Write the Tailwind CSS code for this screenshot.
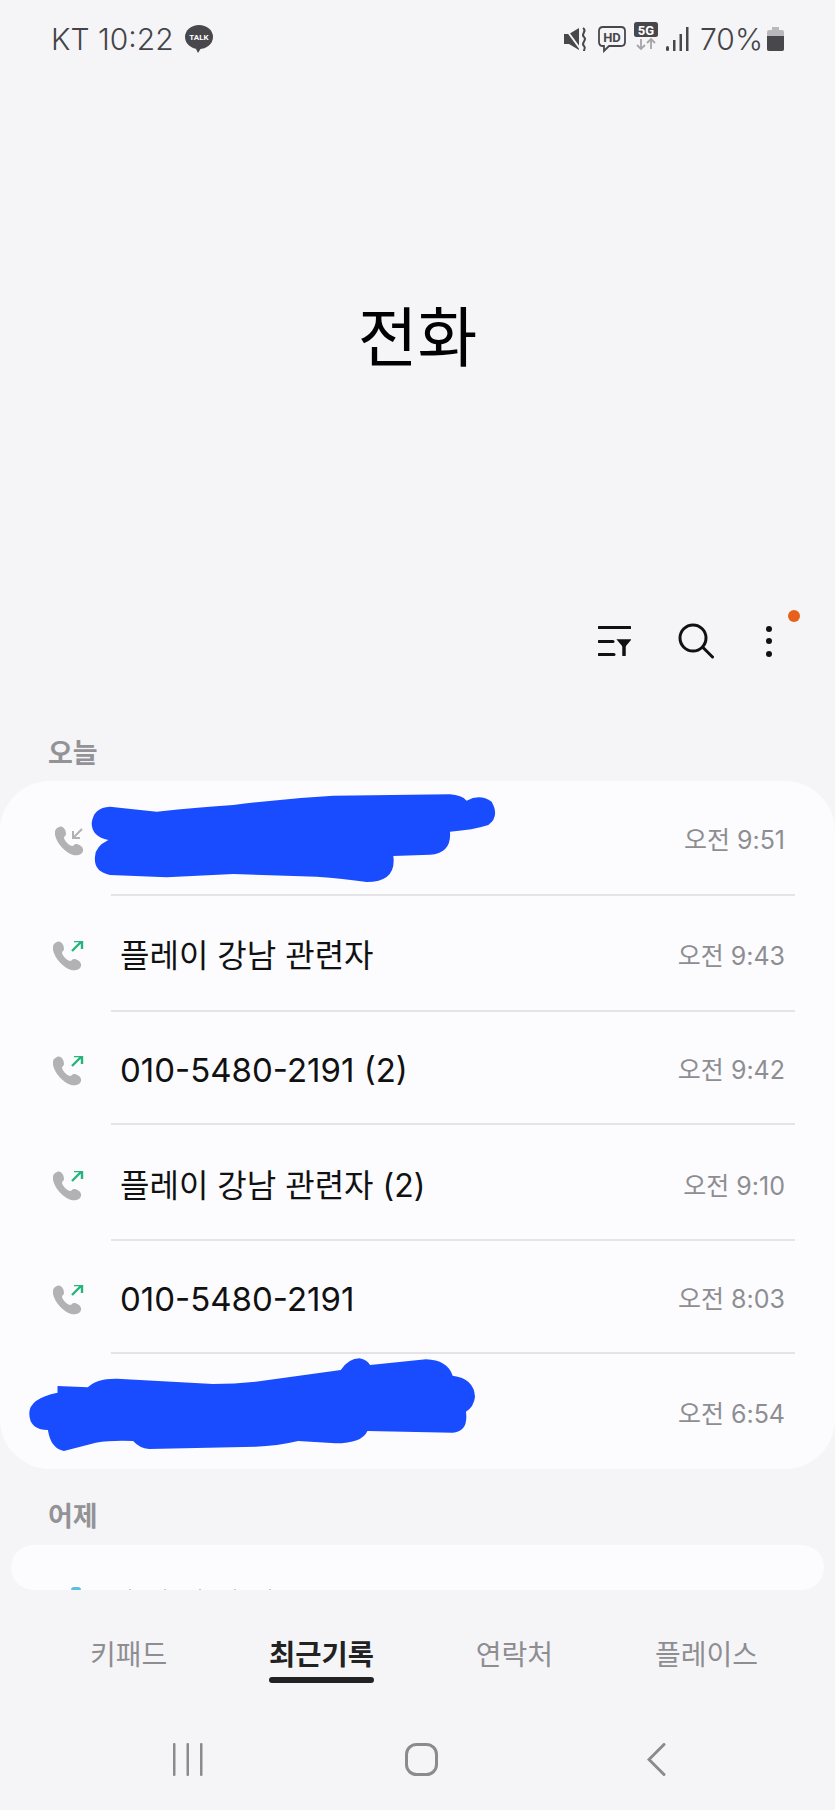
<!DOCTYPE html>
<html lang="ko">
<head>
    <meta charset="UTF-8">
    <meta name="viewport" content="width=device-width, initial-scale=1.0">
    <title>전화</title>
    <script src="https://cdn.jsdelivr.net/npm/@tailwindcss/browser@4"></script>
</head>
<body class="bg-[#f5f5f7]">
<div class="w-[835px] h-[1810px] overflow-hidden bg-[#f5f5f7] font-[Inter,'Noto_Sans_CJK_KR',sans-serif]">

    <!-- 상태 표시줄 -->
    <div class="h-[78px] flex items-center pl-[51px] pr-[51px] text-[#444448]">
        <span class="text-[30px] font-light leading-none">KT 10:22</span>
        <svg class="ml-[11px]" width="28" height="28" viewBox="0 0 28 28">
            <ellipse cx="14" cy="12" rx="14" ry="12" fill="#48484c"/>
            <path d="M9 20 L13 28 L18 20 Z" fill="#48484c"/>
            <text x="14" y="15" text-anchor="middle" font-size="8" font-weight="700" fill="#fff" font-family="Roboto">TALK</text>
        </svg>
        <div class="ml-auto flex items-center">
            <svg width="24" height="24" viewBox="0 0 24 24">
                <path d="M0 7 H5 L15 1 V23 L5 17 H0 Z" fill="#48484c"/>
                <path d="M1 1 L17 23" stroke="#f5f5f7" stroke-width="2"/>
                <path d="M19 1 C24 4 16 7 20 10 C24 13 16 16 20 19 C22 21 20 22 20 24" stroke="#48484c" stroke-width="2" fill="none"/>
            </svg>
            <svg class="ml-[10px]" width="28" height="28" viewBox="0 0 28 28">
                <path d="M5 2 H23 Q27 2 27 6 V17 Q27 21 23 21 H11 L6 26 V21 H5 Q1 21 1 17 V6 Q1 2 5 2 Z" fill="none" stroke="#48484c" stroke-width="1.8"/>
                <text x="14" y="16.5" text-anchor="middle" font-size="13" font-weight="700" fill="#48484c" font-family="Roboto">HD</text>
            </svg>
            <svg class="ml-[8px] -mt-[6px]" width="24" height="28" viewBox="0 0 24 28">
                <rect x="0" y="0" width="24" height="15" rx="2.5" fill="#48484c"/>
                <text x="12" y="12.5" text-anchor="middle" font-size="13" font-weight="700" fill="#fff" font-family="Roboto">5G</text>
                <path d="M7 17 V27 M3 23 L7 27 L11 23" stroke="#a5a5a8" stroke-width="1.8" fill="none"/>
                <path d="M17 27 V17 M13 21 L17 17 L21 21" stroke="#a5a5a8" stroke-width="1.8" fill="none"/>
            </svg>
            <svg class="ml-[8px]" width="23" height="24" viewBox="0 0 23 24">
                <rect x="0" y="19" width="3" height="5" rx="1.5" fill="#48484c"/>
                <rect x="7" y="13" width="2.5" height="11" fill="#48484c"/>
                <rect x="13.5" y="7" width="2.5" height="17" fill="#48484c"/>
                <rect x="20" y="0" width="2.5" height="24" fill="#48484c"/>
            </svg>
            <span class="ml-[11px] text-[30px] font-light leading-none">70%</span>
            <svg class="ml-[4px]" width="17" height="24" viewBox="0 0 17 24">
                <path d="M5 0 H12 V3 H15 Q17 3 17 5 V22 Q17 24 15 24 H2 Q0 24 0 22 V5 Q0 3 2 3 H5 Z" fill="#b9b9bc"/>
                <path d="M0 9 H17 V22 Q17 24 15 24 H2 Q0 24 0 22 Z" fill="#48484c"/>
            </svg>
        </div>
    </div>

    <!-- 제목 -->
    <div class="h-[518px] flex items-center justify-center">
        <h1 class="text-[65px] leading-none text-black">전화</h1>
    </div>

    <!-- 도구 모음 -->
    <div class="h-[90px] flex items-center justify-end pr-[63px]">
        <svg width="33" height="30" viewBox="0 0 33 30" fill="none" stroke="#111" stroke-width="3" stroke-linecap="round">
            <path d="M1 1.5 H32"/>
            <path d="M1 15.5 H15"/>
            <path d="M1 28.5 H16"/>
            <path d="M20 14 H32 L26 21 Z" fill="#111" stroke-width="1.5"/>
            <path d="M26 18 V29" stroke-width="3.5"/>
        </svg>
        <svg class="ml-[47px]" width="36" height="36" viewBox="0 0 36 36" fill="none" stroke="#111" stroke-width="3" stroke-linecap="round">
            <circle cx="15" cy="15" r="13"/>
            <path d="M25 24.5 L34.5 34"/>
        </svg>
        <div class="relative ml-[52px] flex flex-col gap-[6.5px]">
            <span class="block size-[6px] rounded-full bg-[#111]"></span>
            <span class="block size-[6px] rounded-full bg-[#111]"></span>
            <span class="block size-[6px] rounded-full bg-[#111]"></span>
            <span class="absolute left-[22px] -top-[16px] size-[12px] rounded-full bg-[#e8611c]"></span>
        </div>
    </div>

    <!-- 오늘 -->
    <div class="h-[95px] pt-[53px] pl-[48px]">
        <span class="block text-[27px] leading-[30px] font-bold text-[#939397]">오늘</span>
    </div>

    <div class="relative h-[688px] rounded-[50px] bg-[#fcfcff]">
        <!-- 1 -->
        <div class="h-[113px] flex items-center pt-[6px] pr-[50px] pl-[55px]">
            <svg width="30" height="30" viewBox="0 0 30 30">
                <path d="M4 1 C8 -1 11 4 11 8 C11 10 9 10 9 12 C10 15 13 19 17 20 C19 20 19 18 21 18 C24 18 29 21 28 25 C27 29 22 30 18 29 C10 26 2 18 0 9 C-1 5 1 2 4 1 Z" fill="#b2b2b4"/>
                <path d="M27 3 L18 12 M18 5 V12 H25" stroke="#b2b2b4" stroke-width="2" fill="none"/>
            </svg>
            <span class="ml-auto text-[25px] leading-none text-[#8e8e92]">오전 9:51</span>
        </div>
        <!-- 2 -->
        <div class="h-[116px] flex items-center pt-[8px] pr-[50px] pl-[53px] relative">
            <span class="absolute left-[111px] right-[40px] top-0 h-[2px] bg-[#e4e4e6]"></span>
            <svg width="31" height="30" viewBox="0 0 31 30">
                <path d="M4 1 C8 -1 11 4 11 8 C11 10 9 10 9 12 C10 15 13 19 17 20 C19 20 19 18 21 18 C24 18 29 21 28 25 C27 29 22 30 18 29 C10 26 2 18 0 9 C-1 5 1 2 4 1 Z" fill="#b2b2b4"/>
                <path d="M19 10 L29 0 M21 0 H29 V8" stroke="#27b47a" stroke-width="2.4" fill="none"/>
            </svg>
            <span class="ml-[36px] text-[32px] leading-none text-[#111]">플레이 강남 관련자</span>
            <span class="ml-auto text-[25px] leading-none text-[#8e8e92]">오전 9:43</span>
        </div>
        <!-- 3 -->
        <div class="h-[113px] flex items-center pt-[8px] pr-[50px] pl-[53px] relative">
            <span class="absolute left-[111px] right-[40px] top-0 h-[2px] bg-[#e4e4e6]"></span>
            <svg width="31" height="30" viewBox="0 0 31 30">
                <path d="M4 1 C8 -1 11 4 11 8 C11 10 9 10 9 12 C10 15 13 19 17 20 C19 20 19 18 21 18 C24 18 29 21 28 25 C27 29 22 30 18 29 C10 26 2 18 0 9 C-1 5 1 2 4 1 Z" fill="#b2b2b4"/>
                <path d="M19 10 L29 0 M21 0 H29 V8" stroke="#27b47a" stroke-width="2.4" fill="none"/>
            </svg>
            <span class="ml-[36px] text-[33px] leading-none text-[#111]">010-5480-2191 (2)</span>
            <span class="ml-auto text-[25px] leading-none text-[#8e8e92]">오전 9:42</span>
        </div>
        <!-- 4 -->
        <div class="h-[116px] flex items-center pt-[10px] pr-[50px] pl-[53px] relative">
            <span class="absolute left-[111px] right-[40px] top-0 h-[2px] bg-[#e4e4e6]"></span>
            <svg width="31" height="30" viewBox="0 0 31 30">
                <path d="M4 1 C8 -1 11 4 11 8 C11 10 9 10 9 12 C10 15 13 19 17 20 C19 20 19 18 21 18 C24 18 29 21 28 25 C27 29 22 30 18 29 C10 26 2 18 0 9 C-1 5 1 2 4 1 Z" fill="#b2b2b4"/>
                <path d="M19 10 L29 0 M21 0 H29 V8" stroke="#27b47a" stroke-width="2.4" fill="none"/>
            </svg>
            <span class="ml-[36px] text-[32px] leading-none text-[#111]">플레이 강남 관련자 (2)</span>
            <span class="ml-auto text-[25px] leading-none text-[#8e8e92]">오전 9:10</span>
        </div>
        <!-- 5 -->
        <div class="h-[113px] flex items-center pt-[8px] pr-[50px] pl-[53px] relative">
            <span class="absolute left-[111px] right-[40px] top-0 h-[2px] bg-[#e4e4e6]"></span>
            <svg width="31" height="30" viewBox="0 0 31 30">
                <path d="M4 1 C8 -1 11 4 11 8 C11 10 9 10 9 12 C10 15 13 19 17 20 C19 20 19 18 21 18 C24 18 29 21 28 25 C27 29 22 30 18 29 C10 26 2 18 0 9 C-1 5 1 2 4 1 Z" fill="#b2b2b4"/>
                <path d="M19 10 L29 0 M21 0 H29 V8" stroke="#27b47a" stroke-width="2.4" fill="none"/>
            </svg>
            <span class="ml-[36px] text-[33px] leading-none text-[#111]">010-5480-2191</span>
            <span class="ml-auto text-[25px] leading-none text-[#8e8e92]">오전 8:03</span>
        </div>
        <!-- 6 -->
        <div class="h-[117px] flex items-center pt-[8px] pr-[50px] pl-[53px] relative">
            <span class="absolute left-[111px] right-[40px] top-0 h-[2px] bg-[#e4e4e6]"></span>
            <span class="ml-auto text-[25px] leading-none text-[#8e8e92]">오전 6:54</span>
        </div>

        <!-- 이름 가림 낙서 -->
        <svg class="absolute left-0 top-[-51px]" width="520" height="260" viewBox="0 0 1560 780">
            <path d="M275 280 Q280 232 330 230 L470 245 Q600 232 700 225 Q850 205 1000 197 L1350 193 Q1385 195 1400 212 Q1440 190 1475 215 Q1500 260 1465 285 Q1420 300 1350 305 Q1355 370 1290 374 L1180 378 Q1190 455 1100 456 Q1030 445 950 440 L700 432 L500 442 L330 435 Q280 425 285 380 Q285 350 325 330 Q275 320 275 280 Z" fill="#1a4cff"/>
        </svg>
        <svg class="absolute left-0 top-[559px]" width="835" height="240" viewBox="0 0 1568 720" preserveAspectRatio="none">
            <path d="M55 220 Q55 175 108 158 L108 138 L165 142 Q180 115 220 116 L400 132 Q440 132 480 125 L640 90 Q655 55 675 55 Q690 60 695 75 L800 58 Q840 60 850 107 Q890 115 892 170 Q890 200 875 215 Q880 275 850 278 L690 273 Q680 310 630 310 L560 303 Q520 318 480 320 L280 327 Q262 325 250 303 Q210 300 180 308 L120 333 Q95 325 90 270 Q55 270 55 220 Z" fill="#1a4cff"/>
        </svg>
    </div>

    <!-- 어제 -->
    <div class="h-[76px] pt-[33px] pl-[48px]">
        <span class="block text-[27px] leading-[30px] font-bold text-[#939397]">어제</span>
    </div>

    <div class="relative mx-[11px] h-[45px] rounded-[34px] bg-[#fcfcff] overflow-hidden">
        <span class="absolute left-[60px] bottom-0 w-[10px] h-[3px] rounded-t-full bg-[#5cbfe0]"></span>
        <div class="absolute left-[118px] bottom-0 flex gap-[33px]">
            <span class="block w-[2px] h-[1px] bg-[#c8c8cc]"></span>
            <span class="block w-[2px] h-[1px] bg-[#c8c8cc]"></span>
            <span class="block w-[2px] h-[1px] bg-[#c8c8cc]"></span>
            <span class="block w-[2px] h-[1px] bg-[#c8c8cc]"></span>
            <span class="block w-[2px] h-[1px] bg-[#c8c8cc]"></span>
        </div>
    </div>

    <!-- 탭 -->
    <div class="h-[133px] pt-[50px] pl-[90px] pr-[77px] flex justify-between items-start text-[28px] leading-[30px] text-[#8e8e92]">
        <span>키패드</span>
        <div class="flex flex-col">
            <span class="font-bold text-[28.5px] text-[#222]">최근기록</span>
            <span class="block mt-[7px] h-[6px] rounded-[3px] bg-[#222]"></span>
        </div>
        <span>연락처</span>
        <span>플레이스</span>
    </div>

    <!-- 내비게이션 바 -->
    <div class="h-[87px] relative">
        <div class="flex items-start pt-[20px] pl-[173px]">
            <svg width="30" height="33" viewBox="0 0 30 33" fill="#8b8b8f">
                <rect x="0" y="0" width="2.5" height="33" rx="1"/>
                <rect x="13.5" y="0" width="2.5" height="33" rx="1"/>
                <rect x="27" y="0" width="2.5" height="33" rx="1"/>
            </svg>
            <svg class="ml-[202px]" width="33" height="33" viewBox="0 0 33 33" fill="none" stroke="#8b8b8f" stroke-width="3">
                <rect x="1.5" y="1.5" width="30" height="30" rx="10"/>
            </svg>
            <svg class="ml-[209px]" width="19" height="33" viewBox="0 0 19 33" fill="none" stroke="#8b8b8f" stroke-width="3" stroke-linecap="round">
                <path d="M17 1.5 L2 16.5 L17 31.5"/>
            </svg>
        </div>
    </div>
</div>
</body>
</html>
